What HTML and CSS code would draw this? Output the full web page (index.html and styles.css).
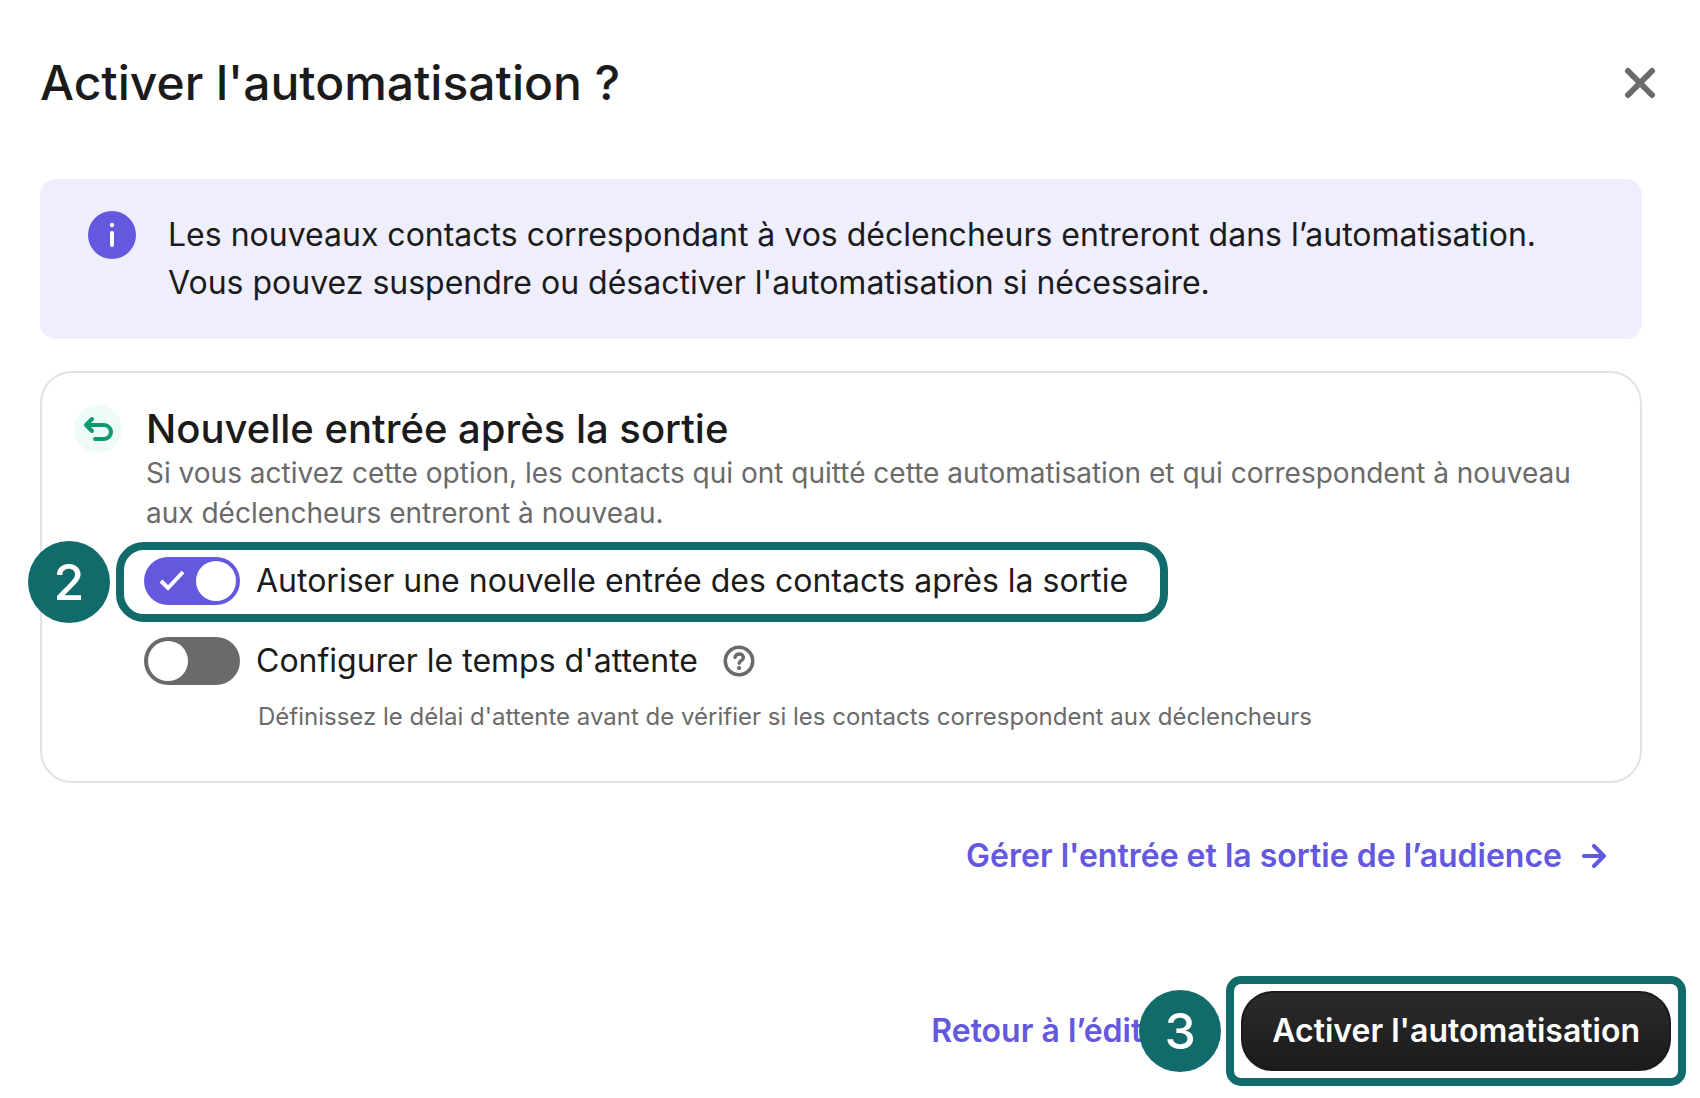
FILE: index.html
```html
<!DOCTYPE html>
<html lang="fr">
    <head>
        <meta charset="utf-8">
        <title>Activer l'automatisation</title>
        <link rel="stylesheet" href="styles.css">
    </head>
    <body>
        <header class="modal-header">
            <h1 class="modal-title">Activer l'automatisation ?</h1>
            <button type="button" class="close-button" aria-label="Fermer">
                <svg width="32" height="32" viewBox="0 0 32 32"><path d="M4 4L28 28M28 4L4 28" /></svg>
            </button>
        </header>

        <main class="modal-body">
            <div class="alert">
                <svg class="alert-icon" width="48" height="48" viewBox="0 0 48 48">
                    <circle cx="24" cy="24" r="24" fill="#6358de" />
                    <circle cx="24" cy="14" r="2.2" fill="#fff" />
                    <path d="M24 22V34" stroke="#fff" stroke-width="4" stroke-linecap="round" />
                </svg>
                <p class="alert-text">Les nouveaux contacts correspondant à vos déclencheurs entreront dans l’automatisation.<br>Vous pouvez suspendre ou désactiver l'automatisation si nécessaire.</p>
            </div>

            <section class="card">
                <svg class="card-icon" width="48" height="48" viewBox="0 0 48 48">
                    <circle cx="24" cy="24" r="24" fill="#effbf8" />
                    <path d="M18 14L12 20L18 26M12 20H30A6.8 6.8 0 0 1 30 34H21" fill="none" stroke="#0b996e" stroke-width="4" stroke-linecap="round" stroke-linejoin="round" />
                </svg>
                <div class="card-content">
                    <h2 class="card-title">Nouvelle entrée après la sortie</h2>
                    <p class="card-text">Si vous activez cette option, les contacts qui ont quitté cette automatisation et qui correspondent à nouveau aux déclencheurs entreront à nouveau.</p>

                    <div class="option highlight highlight-option">
                        <span class="step step-2">2</span>
                        <span class="toggle">
                            <input type="checkbox" id="reentry" class="toggle-input" checked>
                            <svg class="toggle-check" width="28" height="24" viewBox="0 0 28 24"><path d="M3 12L10 19L25 3" /></svg>
                        </span>
                        <label for="reentry">Autoriser une nouvelle entrée des contacts après la sortie</label>
                    </div>

                    <div class="option">
                        <span class="toggle">
                            <input type="checkbox" id="wait" class="toggle-input">
                        </span>
                        <label for="wait">Configurer le temps d'attente</label>
                        <button type="button" class="help-button" aria-label="Aide">
                            <svg width="32" height="32" viewBox="0 0 32 32">
                                <circle cx="16" cy="16" r="13.7" fill="none" stroke="#6a6a6a" stroke-width="3.6" />
                                <path d="M12 12.4C12.4 10.2 14 9 16.2 9C18.7 9 20.4 10.5 20.4 12.7C20.4 15.6 16.2 15.6 16.2 18.2" fill="none" stroke="#6a6a6a" stroke-width="3.4" stroke-linecap="round" />
                                <circle cx="16.1" cy="23" r="2.1" fill="#6a6a6a" />
                            </svg>
                        </button>
                    </div>
                    <p class="option-help">Définissez le délai d'attente avant de vérifier si les contacts correspondent aux déclencheurs</p>
                </div>
            </section>

            <a href="#" class="link audience-link">
                Gérer l'entrée et la sortie de l’audience
                <svg width="24" height="24" viewBox="0 0 24 24"><path d="M2 12H22M12 2L22 12L12 22" /></svg>
            </a>
        </main>

        <footer class="modal-footer">
            <a href="#" class="link">Retour à l’édit</a>
            <div class="highlight highlight-submit">
                <span class="step step-3">3</span>
                <button type="button" class="submit-button">Activer l'automatisation</button>
            </div>
        </footer>
    </body>
</html>
```

FILE: styles.css
```css
body {
    margin: 0;
    background-color: #fff;
    color: #1b1b1b;
    font-family: Inter, "Liberation Sans", sans-serif;
    font-size: 32px;
    line-height: 48px;
}
h1, h2, p {
    margin: 0;
    font-weight: normal;
}
svg {
    display: block;
}
.modal-header {
    display: flex;
    justify-content: space-between;
    align-items: center;
    padding: 51px 36px 64px 40px;
}
.modal-title {
    font-size: 48px;
    line-height: 64px;
    font-weight: 500;
}
.close-button {
    padding: 8px;
    border: none;
    background: none;
    cursor: pointer;
}
.close-button path {
    stroke: #6a6a6a;
    stroke-width: 6;
    stroke-linecap: round;
}
.modal-body {
    padding: 0 58px 0 40px;
}
.alert {
    display: flex;
    gap: 32px;
    padding: 32px 48px;
    border-radius: 16px;
    background-color: #efeefc;
}
.alert-icon, .card-icon {
    flex: none;
}
.card {
    display: flex;
    gap: 24px;
    margin-top: 32px;
    padding: 32px 32px 48px;
    border: 2px solid #e3e3e3;
    border-radius: 32px;
}
.card-content {
    flex: 1;
}
.card-title {
    font-size: 40px;
    font-weight: 500;
}
.card-text {
    color: #6a6a6a;
    font-size: 28px;
    line-height: 40px;
}
.option {
    display: flex;
    align-items: center;
    gap: 16px;
    margin-top: 15px;
    margin-left: -2px;
}
.toggle {
    position: relative;
    display: flex;
}
.toggle-input {
    appearance: none;
    width: 96px;
    height: 48px;
    margin: 0;
    padding: 4px;
    border-radius: 24px;
    background-color: #6a6a6a;
    box-sizing: border-box;
    cursor: pointer;
}
.toggle-input::before {
    content: "";
    display: block;
    width: 40px;
    height: 40px;
    border-radius: 50%;
    background-color: #fff;
}
.toggle-input:checked {
    background-color: #6358de;
}
.toggle-input:checked::before {
    margin-left: auto;
}
.toggle-check {
    position: absolute;
    top: 12px;
    left: 14px;
    pointer-events: none;
}
.toggle-check path {
    fill: none;
    stroke: #fff;
    stroke-width: 4;
}
.help-button {
    padding: 0 9px;
    border: none;
    background: none;
    cursor: pointer;
}
.option-help {
    margin-top: 16px;
    margin-left: 112px;
    color: #6a6a6a;
    font-size: 24px;
    line-height: 32px;
}
.highlight {
    position: relative;
    border: 8px solid #116b6a;
}
.highlight-option {
    width: fit-content;
    margin-top: 9px;
    margin-left: -30px;
    padding: 7px 32px 9px 20px;
    border-radius: 28px;
}
.highlight-submit {
    padding: 7px;
    border-radius: 15px;
}
.step {
    position: absolute;
    width: 82px;
    height: 82px;
    border-radius: 50%;
    background-color: #116b6a;
    color: #fff;
    font-size: 50px;
    line-height: 82px;
    font-weight: 500;
    text-align: center;
}
.step-2 {
    top: -9px;
    left: -96px;
}
.step-3 {
    top: 6px;
    left: -95px;
}
.link {
    color: #6358de;
    font-weight: 600;
    text-decoration: none;
}
.audience-link {
    display: flex;
    justify-content: flex-end;
    align-items: center;
    gap: 20px;
    margin-top: 49px;
    padding-right: 36px;
}
.audience-link path {
    fill: none;
    stroke: #6358de;
    stroke-width: 4;
    stroke-linecap: round;
    stroke-linejoin: round;
}
.modal-footer {
    display: flex;
    justify-content: flex-end;
    align-items: center;
    gap: 84px;
    margin-top: 96px;
    padding: 0 14px 12px 40px;
}
.submit-button {
    display: block;
    padding: 14px 29px;
    border: 2px solid #1b1b1b;
    border-radius: 32px;
    background: linear-gradient(#2b2b2b, #1b1b1b);
    color: #fff;
    font-family: inherit;
    font-size: 32px;
    line-height: 48px;
    font-weight: 600;
    cursor: pointer;
}
```
